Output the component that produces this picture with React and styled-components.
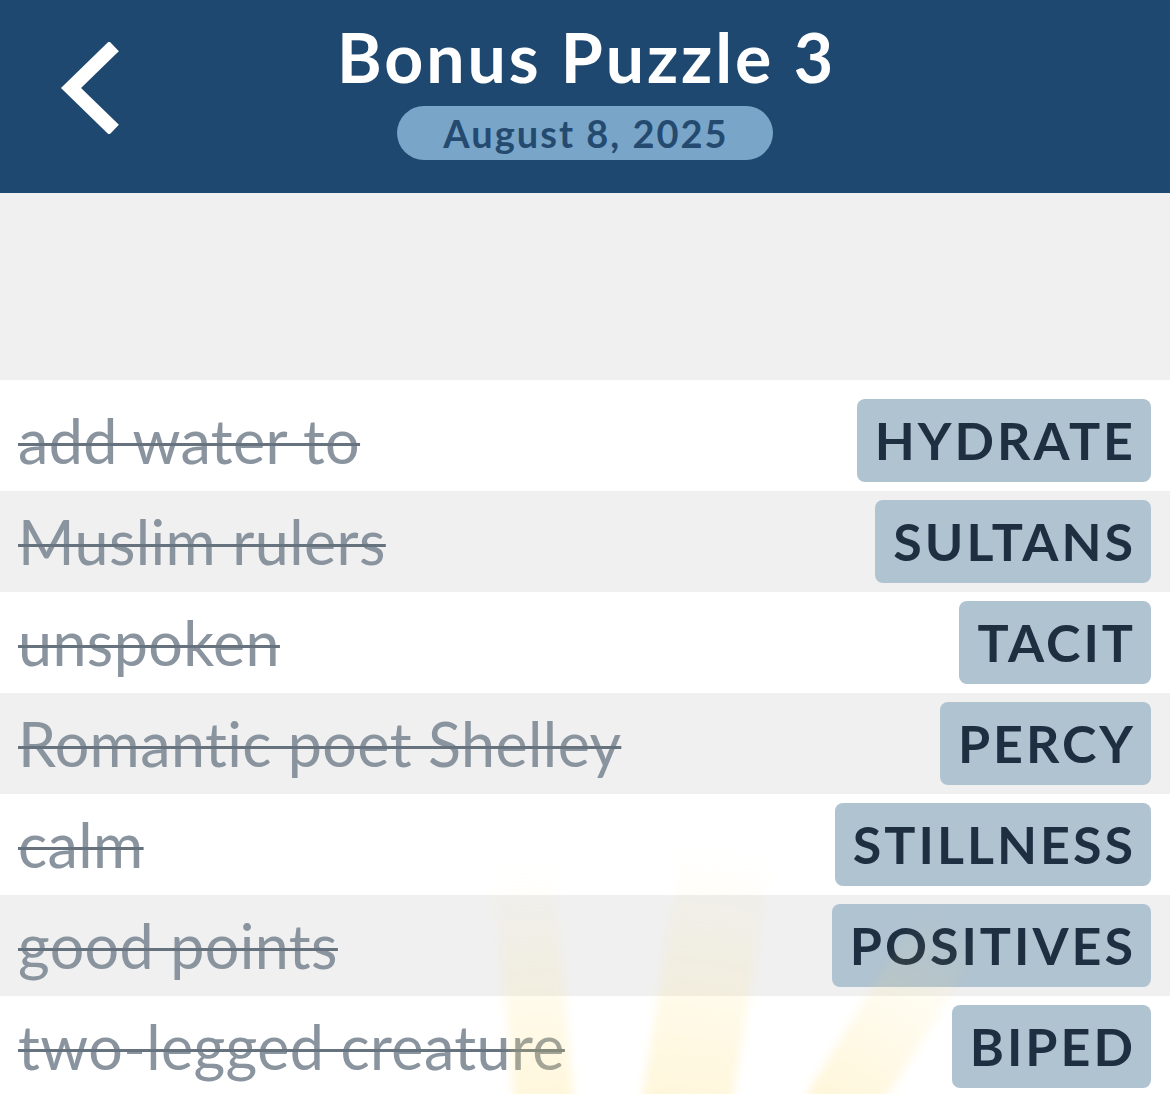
import React from 'react';
import styled, { createGlobalStyle } from 'styled-components';

const GlobalStyle = createGlobalStyle`
  html, body {
    margin: 0;
    padding: 0;
    background: #ffffff;
  }
  body {
    font-family: Lato, "Noto Sans", sans-serif;
  }
`;

const Page = styled.div`
  width: 1170px;
  height: 1094px;
  overflow: hidden;
  position: relative;
  background: #ffffff;
`;

const Header = styled.header`
  height: 193px;
  background: #1f4870;
  display: grid;
  grid-template-columns: 170px 1fr 170px;
  align-items: start;
`;

const BackButton = styled.button`
  background: none;
  border: none;
  padding: 42px 0 0 57px;
  display: flex;
  cursor: pointer;
`;

const TitleBlock = styled.div`
  display: flex;
  flex-direction: column;
  align-items: center;
  padding-top: 18px;
`;

const Title = styled.h1`
  margin: 0;
  color: #ffffff;
  font-size: 68px;
  font-weight: 700;
  letter-spacing: 2.9px;
  line-height: 78px;
  padding-left: 3px;
`;

const DatePill = styled.div`
  margin-top: 10px;
  background: #79a5c9;
  color: #254a70;
  font-size: 38px;
  font-weight: 700;
  letter-spacing: 2px;
  height: 54px;
  line-height: 54px;
  padding: 0 44px 0 46px;
  border-radius: 27px;
`;

const Spacer = styled.div`
  height: 187px;
  background: #f0f0f0;
`;

const List = styled.ul`
  list-style: none;
  margin: 0;
  padding: 10px 0 0;
`;

const Row = styled.li`
  height: 101px;
  display: flex;
  align-items: center;
  justify-content: space-between;
  padding: 0 19px 0 18px;
  background: ${p => (p.$shaded ? '#f0f0f0' : '#ffffff')};
`;

const Clue = styled.span`
  font-size: 61px;
  font-weight: 400;
  letter-spacing: 0.4px;
  color: #8a949f;
  text-decoration: line-through;
  text-decoration-color: #66737f;
  text-decoration-thickness: 3px;
`;

const Answer = styled.span`
  background: #b0c3d1;
  color: #1e2f42;
  font-size: 52px;
  font-weight: 700;
  letter-spacing: 3px;
  height: 83px;
  line-height: 83px;
  padding: 0 15px 0 18px;
  border-radius: 8px;
`;

const Rays = styled.div`
  position: absolute;
  left: 480px;
  top: 820px;
  width: 480px;
  height: 274px;
  pointer-events: none;
  filter: blur(5px);
`;

const Ray = styled.div`
  position: absolute;
  bottom: -20px;
  background: linear-gradient(to top, rgba(255, 224, 120, 0.28), rgba(255, 224, 120, 0));
  transform-origin: bottom center;
`;

const clues = [
  ['add water to', 'HYDRATE'],
  ['Muslim rulers', 'SULTANS'],
  ['unspoken', 'TACIT'],
  ['Romantic poet Shelley', 'PERCY'],
  ['calm', 'STILLNESS'],
  ['good points', 'POSITIVES'],
  ['two-legged creature', 'BIPED'],
];

export default function App() {
  return (
    <Page>
      <GlobalStyle />
      <Header>
        <BackButton aria-label="Back">
          <svg width="64" height="92" viewBox="0 0 64 92">
            <polyline
              points="52,9 14,46 52,83"
              fill="none"
              stroke="#ffffff"
              strokeWidth="14"
              strokeLinecap="square"
              strokeLinejoin="miter"
            />
          </svg>
        </BackButton>
        <TitleBlock>
          <Title>Bonus Puzzle 3</Title>
          <DatePill>August 8, 2025</DatePill>
        </TitleBlock>
        <div />
      </Header>
      <Spacer />
      <List>
        {clues.map(([clue, answer], i) => (
          <Row key={answer} $shaded={i % 2 === 1}>
            <Clue>{clue}</Clue>
            <Answer>{answer}</Answer>
          </Row>
        ))}
      </List>
      <Rays>
        <Ray style={{ left: 35, width: 60, height: 250, transform: 'rotate(-5deg)' }} />
        <Ray style={{ left: 160, width: 90, height: 270, transform: 'rotate(9deg)' }} />
        <Ray style={{ left: 320, width: 70, height: 230, transform: 'rotate(32deg)' }} />
      </Rays>
    </Page>
  );
}
